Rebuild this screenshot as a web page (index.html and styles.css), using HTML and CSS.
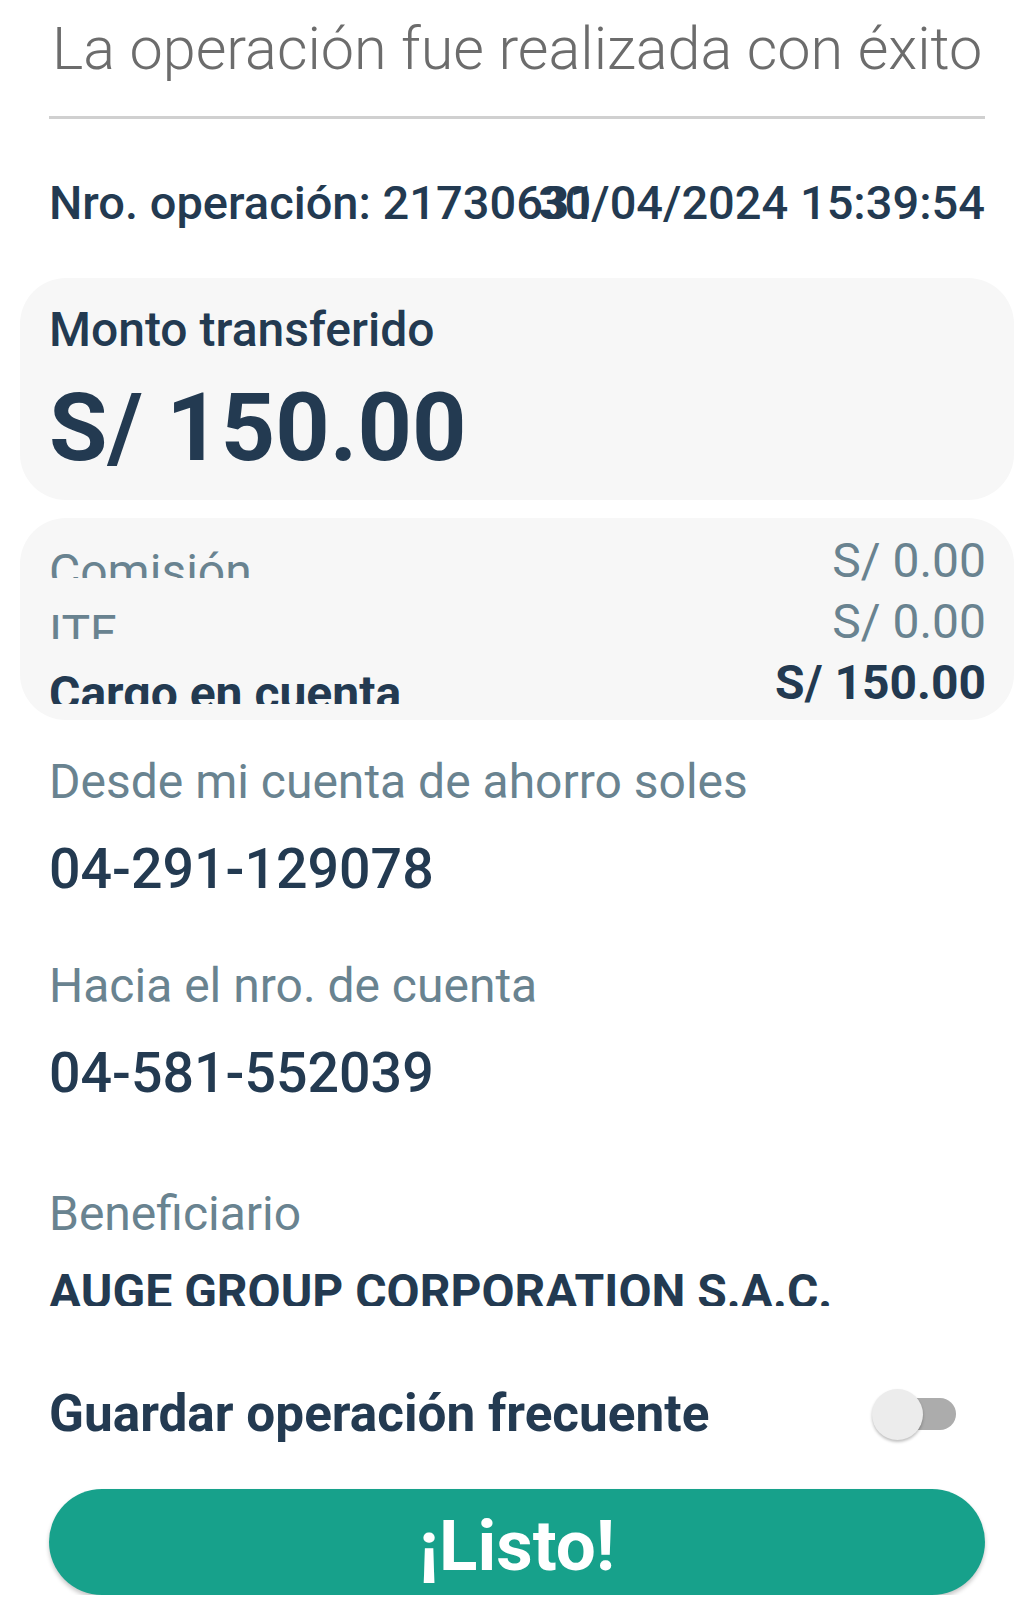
FILE: index.html
```html
<!DOCTYPE html>
<html lang="es">
<head>
<meta charset="utf-8">
<title>Operación exitosa</title>
<link rel="stylesheet" href="styles.css">
</head>
<body>
<main class="screen">
  <h1 class="title">La operación fue realizada con éxito</h1>
  <hr class="divider">
  <div class="op-row">
    <span class="op-num">Nro. operación: 21730631</span>
    <span class="op-date">30/04/2024 15:39:54</span>
  </div>

  <section class="card amount-card">
    <div class="amount-label">Monto transferido</div>
    <div class="amount-value">S/ 150.00</div>
  </section>

  <section class="card charges">
    <div class="charge-row">
      <span class="charge-label">Comisión</span>
      <span class="charge-value">S/ 0.00</span>
    </div>
    <div class="charge-row">
      <span class="charge-label">ITF</span>
      <span class="charge-value">S/ 0.00</span>
    </div>
    <div class="charge-row total">
      <span class="charge-label">Cargo en cuenta</span>
      <span class="charge-value">S/ 150.00</span>
    </div>
  </section>

  <div class="field first">
    <div class="field-label">Desde mi cuenta de ahorro soles</div>
    <div class="field-value">04-291-129078</div>
  </div>
  <div class="field">
    <div class="field-label">Hacia el nro. de cuenta</div>
    <div class="field-value">04-581-552039</div>
  </div>
  <div class="field beneficiary">
    <div class="field-label">Beneficiario</div>
    <div class="beneficiary-value">AUGE GROUP CORPORATION S.A.C.</div>
  </div>

  <div class="toggle-row">
    <span class="toggle-label">Guardar operación frecuente</span>
    <span class="switch">
      <span class="thumb"></span>
      <span class="track"></span>
    </span>
  </div>

  <button class="done">¡Listo!</button>
</main>
</body>
</html>
```

FILE: styles.css
```css
* { box-sizing: border-box; }

html, body {
  margin: 0;
  padding: 0;
  background: #ffffff;
}

body {
  font-family: Roboto, "Liberation Sans", Arial, sans-serif;
  color: #233a51;
}

.screen {
  width: 1034px;
  padding: 0 49px;
}

.title {
  margin: 9px 0 0 0;
  padding-left: 3px;
  font-size: 59.3px;
  font-weight: 300;
  line-height: 80px;
  color: #6c6c6c;
  white-space: nowrap;
}

.divider {
  margin: 27px 0 0 0;
  border: 0;
  height: 3px;
  background: #d0d0d0;
}

.op-row {
  margin-top: 54px;
  display: grid;
  font-size: 47px;
  font-weight: 500;
  line-height: 60px;
  white-space: nowrap;
}

.op-num,
.op-date {
  grid-area: 1 / 1;
}

.op-num { justify-self: start; }
.op-date { justify-self: end; }

.card {
  margin: 0 -29px;
  padding: 0 28px 0 29px;
  background: #f7f7f7;
  border-radius: 46px;
}

.amount-card {
  margin-top: 45px;
  height: 222px;
  padding-top: 22px;
}

.amount-label {
  font-size: 48px;
  font-weight: 500;
  line-height: 60px;
}

.amount-value {
  margin-top: 13px;
  font-size: 95px;
  font-weight: 700;
  line-height: 110px;
}

.charges {
  margin-top: 18px;
  height: 202px;
  padding-top: 12px;
}

.charge-row {
  display: flex;
  justify-content: space-between;
  align-items: flex-start;
  height: 61px;
  font-size: 48px;
  line-height: 61px;
  color: #698390;
}

.charge-label {
  height: 48px;
  padding-top: 11px;
  overflow: hidden;
  white-space: nowrap;
}

.charge-row.total {
  font-weight: 700;
  color: #233a51;
}

.charge-row.total .charge-label {
  height: 52px;
}

.field.first { margin-top: 32px; }
.field { margin-top: 51px; }
.field.beneficiary { margin-top: 75px; }

.field-label {
  font-size: 48px;
  line-height: 60px;
  color: #698390;
}

.field-value {
  margin-top: 23px;
  font-size: 55.5px;
  font-weight: 500;
  line-height: 70px;
}

.beneficiary-value {
  margin-top: 18px;
  height: 44px;
  overflow: hidden;
  font-size: 48px;
  font-weight: 700;
  line-height: 60px;
  white-space: nowrap;
}

.toggle-row {
  margin-top: 73px;
  height: 70px;
  display: flex;
  align-items: center;
  justify-content: space-between;
}

.toggle-label {
  font-size: 51.3px;
  font-weight: 700;
  line-height: 70px;
}

.switch {
  display: flex;
  align-items: center;
  margin-right: 29px;
}

.thumb {
  position: relative;
  z-index: 1;
  width: 51px;
  height: 51px;
  margin-right: -26px;
  border-radius: 50%;
  background: #ececec;
  box-shadow: 0 2px 3px rgba(0, 0, 0, 0.25);
}

.track {
  width: 59px;
  height: 32px;
  border-radius: 16px;
  background: #acacac;
}

.done {
  display: block;
  width: 100%;
  margin-top: 40px;
  height: 106px;
  padding: 8px 0 0 0;
  border: 0;
  border-radius: 53px;
  background: #17a18b;
  color: #ffffff;
  font-family: Roboto, "Liberation Sans", Arial, sans-serif;
  font-size: 71px;
  font-weight: 700;
  line-height: 98px;
  box-shadow: 0 3px 4px rgba(0, 0, 0, 0.22);
}
```
